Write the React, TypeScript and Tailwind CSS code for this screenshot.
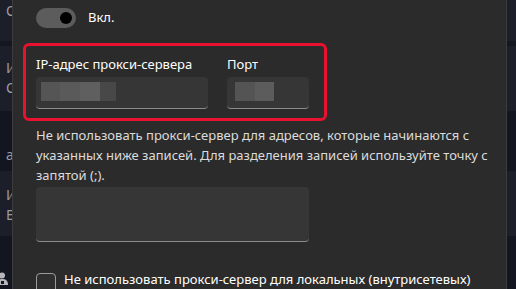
import React from 'react';

const bands = [
  { h: 'h-[41px]', bg: 'bg-[#1c1e29]', text: 'С', top: 'pt-[1px]' },
  { h: 'h-[5px]', bg: 'bg-[#141620]', text: '', top: '' },
  { h: 'h-[65px]', bg: 'bg-[#1c1e29]', text: 'И\nС', top: 'pt-[12px]' },
  { h: 'h-[60px]', bg: 'bg-[#131521]', text: 'ас', top: 'pt-[34px]' },
  { h: 'h-[65px]', bg: 'bg-[#1c1e29]', text: 'И\nЕ', top: 'pt-[14px]' },
  { h: 'h-[53px]', bg: 'bg-[#131521]', text: '', top: '' },
];

const Pixels: React.FC<{ cells: string[] }> = ({ cells }) => (
  <div className="flex h-[19px]">
    {cells.map((c, i) => (
      <div key={i} className={`h-full ${c}`}></div>
    ))}
  </div>
);

const App: React.FC = () => {
  return (
    <div
      className="w-[516px] h-[289px] overflow-hidden flex bg-[#1c1e29] text-[#e4e4e4]"
      style={{ fontFamily: '"Noto Sans", "Open Sans", sans-serif' }}
    >
      {/* page behind the dialog */}
      <div className="w-[12px] shrink-0 flex flex-col overflow-hidden">
        {bands.map((b, i) => (
          <div key={i} className={`${b.h} ${b.bg} ${b.top} shrink-0 overflow-hidden`}>
            {b.text && (
              <div className="whitespace-pre text-[14px] leading-[20px] text-[#9a9ca4] pl-[6px]">{b.text}</div>
            )}
            {i === bands.length - 1 && (
              <svg width="12" height="14" viewBox="0 0 12 14" className="mt-[36px] -ml-[4px]">
                <circle cx="6" cy="3.5" r="3" fill="#b4b6bc" />
                <path d="M0 13 C0 8 2.5 7 6 7 C9.5 7 12 8 12 13 Z" fill="#b4b6bc" />
                <rect x="5" y="9" width="3" height="3" fill="#131521" />
              </svg>
            )}
          </div>
        ))}
      </div>

      {/* dialog */}
      <div className="w-[495px] shrink-0 h-full bg-[#2b2b2b] border-x border-[#3c3c3c] pl-[23px] pt-[8px]">
        <div className="flex items-center gap-[12px] h-[20px]">
          <div className="w-[40px] h-[20px] rounded-full bg-[#5c5c5c] flex items-center justify-end pr-[4px]">
            <div className="w-[12px] h-[12px] rounded-full bg-black"></div>
          </div>
          <span className="text-[13px] text-white">Вкл.</span>
        </div>

        <div className="mt-[15px] -ml-[13px] w-[304px] h-[78px] border-[3px] border-[#e81130] rounded-[6px] pl-[10px] pt-[8px] flex gap-[19px]">
          <div className="flex flex-col">
            <span className="text-[13px] leading-[20px] text-white">IP-адрес прокси-сервера</span>
            <div className="mt-[3px] w-[172px] h-[32px] rounded-[4px] bg-[#363636] border-b border-[#8b8b8b] pl-[5px] pt-[5px]">
              <Pixels cells={['w-[19px] bg-[#555555]', 'w-[20px] bg-[#5a5a5a]', 'w-[20px] bg-[#5f5f5f]', 'w-[16px] bg-[#484848]']} />
            </div>
          </div>
          <div className="flex flex-col">
            <span className="text-[13px] leading-[20px] text-white">Порт</span>
            <div className="mt-[3px] w-[82px] h-[32px] rounded-[4px] bg-[#363636] border-b border-[#8b8b8b] pl-[8px] pt-[5px]">
              <Pixels cells={['w-[20px] bg-[#545454]', 'w-[19px] bg-[#5c5c5c]']} />
            </div>
          </div>
        </div>

        <p className="mt-[4px] w-[462px] text-[13px] leading-[20px] text-[#dcdcdc]">
          Не использовать прокси-сервер для адресов, которые начинаются с<br />
          указанных ниже записей. Для разделения записей используйте точку с запятой (;).
        </p>

        <div className="mt-[2px] w-[273px] h-[55px] rounded-[4px] bg-[#363636] border-b border-[#8b8b8b]"></div>

        <div className="mt-[31px] flex gap-[8px]">
          <div className="w-[20px] h-[20px] rounded-[4px] border border-[#9a9a9a] bg-[#2f2f2f] shrink-0"></div>
          <span className="text-[13px] leading-[20px] text-white -mt-[4px]">
            Не использовать прокси-сервер для локальных (внутрисетевых)
          </span>
        </div>
      </div>

      <div className="w-[9px] shrink-0 flex flex-col">
        {bands.map((b, i) => (
          <div key={i} className={`${b.h} ${b.bg} shrink-0`}></div>
        ))}
      </div>
    </div>
  );
};

export default App;
